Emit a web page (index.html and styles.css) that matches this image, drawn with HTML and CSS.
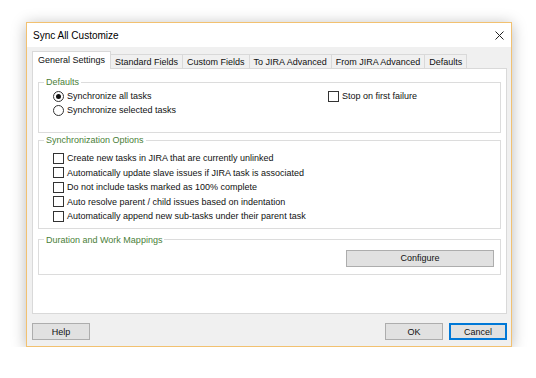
FILE: index.html
```html
<!DOCTYPE html>
<html lang="en">
<head>
<meta charset="UTF-8">
<title>Sync All Customize</title>
<meta name="viewport" content="width=device-width, initial-scale=1.0">
<link rel="stylesheet" href="styles.css">
</head>

<body>

<div class="window">
  <div class="titlebar">
    <span>Sync All Customize</span>
    <svg class="close" width="9" height="9" viewBox="0 0 9 9"><path d="M0.5 0.5L8.5 8.5M8.5 0.5L0.5 8.5" stroke="#222" stroke-width="1" fill="none"/></svg>
  </div>

  <div class="content">
    <div class="tabs">
      <div class="tab active">General Settings</div>
      <div class="tab">Standard Fields</div>
      <div class="tab">Custom Fields</div>
      <div class="tab">To JIRA Advanced</div>
      <div class="tab">From JIRA Advanced</div>
      <div class="tab">Defaults</div>
    </div>

    <div class="panel">
      <fieldset class="group">
        <legend>Defaults</legend>
        <div class="inner defaults">
          <div>
            <label class="opt"><span class="radio on"></span>Synchronize all tasks</label>
            <label class="opt"><span class="radio"></span>Synchronize selected tasks</label>
          </div>
          <div>
            <label class="opt"><span class="check"></span>Stop on first failure</label>
          </div>
        </div>
      </fieldset>

      <fieldset class="group sync">
        <legend>Synchronization Options</legend>
        <div class="inner">
          <label class="opt row"><span class="check"></span>Create new tasks in JIRA that are currently unlinked</label>
          <label class="opt row"><span class="check"></span>Automatically update slave issues if JIRA task is associated</label>
          <label class="opt row"><span class="check"></span>Do not include tasks marked as 100% complete</label>
          <label class="opt row"><span class="check"></span>Auto resolve parent / child issues based on indentation</label>
          <label class="opt row"><span class="check"></span>Automatically append new sub-tasks under their parent task</label>
        </div>
      </fieldset>

      <fieldset class="group mappings">
        <legend>Duration and Work Mappings</legend>
        <div class="inner configure">
          <button class="btn wide">Configure</button>
        </div>
      </fieldset>
    </div>

    <div class="footer">
      <button class="btn">Help</button>
      <span class="spacer"></span>
      <button class="btn">OK</button>
      <button class="btn default">Cancel</button>
    </div>
  </div>
</div>

</body>
</html>
```

FILE: styles.css
```css
*{box-sizing:border-box}
body{margin:0;background:#fff;font-family:"Liberation Sans",Arial,sans-serif;font-size:9px;color:#111}
.window{width:486px;margin:22px 0 0 26px;background:#f0f0f0;border:1px solid #f2c170;box-shadow:0 2px 14px rgba(0,0,0,.28)}
.titlebar{height:24px;background:#fff;display:flex;align-items:center;justify-content:space-between;padding:0 7px 0 6px;font-size:10px;color:#000}
.close{display:block}
.content{padding:4px 4px 6px 5px}
.tabs{display:flex;align-items:flex-end;height:17px}
.tab{height:14px;line-height:14px;padding:0 4px;border:1px solid #d9d9d9;border-bottom:0;margin-left:-1px;background:#f0f0f0;white-space:nowrap}
.tab:first-child{margin-left:0}
.tab.active{height:18px;line-height:17px;padding:0 5px;background:#fff;margin-bottom:-1px;position:relative;z-index:1}
.panel{height:246px;background:#fff;border:1px solid #d9d9d9;padding:7px 5px 0 5px}
.group{margin:0;padding:0;min-width:0;border:1px solid #dcdcdc}
.group legend{margin-left:5px;padding:0 2px;line-height:12px;color:#4a8038}
.inner{padding:1px 6px 15px 14px}
.defaults{display:grid;grid-template-columns:275px 1fr}
.opt{display:flex;align-items:center;height:14px;gap:3px;white-space:nowrap}
.row{height:14.5px}
.sync{margin-top:1px}
.sync .inner{padding-top:5px;padding-bottom:4px}
.mappings{margin-top:5px}
.configure{display:flex;justify-content:flex-end;padding:4px 6px 7px 14px}
.radio{width:11px;height:11px;border:1px solid #333;border-radius:50%;display:flex;align-items:center;justify-content:center;background:#fff}
.radio.on::after{content:"";width:5px;height:5px;border-radius:50%;background:#111}
.check{width:11px;height:11px;border:1px solid #333;background:#fff}
.btn{height:17px;width:58px;padding:0;border:1px solid #adadad;background:#e1e1e1;font-family:inherit;font-size:9px;color:#111}
.btn.wide{width:148px}
.btn.default{border-color:#0078d7;box-shadow:inset 0 0 0 1px #0078d7}
.footer{display:flex;gap:6px;margin-top:9px}
.spacer{flex:1}
```
